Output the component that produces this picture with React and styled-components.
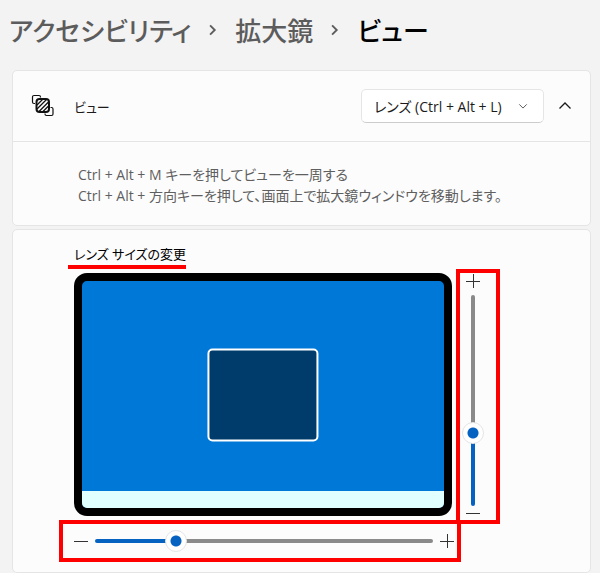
import { useState } from "react";
import styled, { createGlobalStyle } from "styled-components";

const GlobalStyle = createGlobalStyle`
  * {
    box-sizing: border-box;
  }

  body {
    margin: 0;
    background: #f3f3f3;
    color: #1b1b1b;
    font-family: "Open Sans", "Noto Sans CJK JP", sans-serif;
    font-size: 14px;
    font-feature-settings: "palt";
  }
`;

const ViewIcon = () => (
  <svg width="24" height="24" viewBox="0 0 24 24" fill="none" stroke="#111" aria-hidden="true">
    <path d="M4 9.500H3A1.500 1.500 0 0 1 1.500 8V3A1.500 1.500 0 0 1 3 1.500H8A1.500 1.500 0 0 1 9.500 3V3.500" strokeWidth="1.200" />
    <path d="M19.500 13.500H20.500A1.500 1.500 0 0 1 22 15V20A1.500 1.500 0 0 1 20.500 21.500H15.500A1.500 1.500 0 0 1 14 20V19.500" strokeWidth="1.200" />
    <rect x="5.500" y="5" width="12.500" height="13" rx="3" strokeWidth="2" />
    <path d="M6 11L11.500 5.500M6 15L15.500 5.500M8 17.500L17.500 8M12 17.500L17.500 12" strokeWidth="1.300" />
  </svg>
);

const Chevron = ({ d, size = 12, width = 1 }) => (
  <svg width={size} height={size} viewBox="0 0 12 12" fill="none" stroke="currentColor" strokeWidth={width} aria-hidden="true">
    <path d={d} />
  </svg>
);

const Minus = () => (
  <svg width="14" height="14" viewBox="0 0 14 14" stroke="#333" aria-hidden="true">
    <path d="M0 7.500H14" />
  </svg>
);

const Plus = () => (
  <svg width="14" height="14" viewBox="0 0 14 14" stroke="#333" aria-hidden="true">
    <path d="M0 7.500H14M7.500 0V14" />
  </svg>
);

export default function App() {
  const [view, setView] = useState("lens");
  const [open, setOpen] = useState(true);
  const [lensWidth, setLensWidth] = useState(22);
  const [lensHeight, setLensHeight] = useState(33);

  return (
    <Page>
      <GlobalStyle />
      <Breadcrumb aria-label="階層">
        <Crumb href="#accessibility">アクセシビリティ</Crumb>
        <Chevron d="M3.500 2L7.500 6L3.500 10" size={14} width={1.600} />
        <Crumb href="#magnifier">拡大鏡</Crumb>
        <Chevron d="M3.500 2L7.500 6L3.500 10" size={14} width={1.600} />
        <Current>ビュー</Current>
      </Breadcrumb>

      <Card>
        <CardHeader>
          <ViewIcon />
          <ViewLabel htmlFor="view">ビュー</ViewLabel>
          <SelectWrap>
            <Select id="view" value={view} onChange={(e) => setView(e.target.value)}>
              <option value="lens">レンズ (Ctrl + Alt + L)</option>
              <option value="full">全画面表示 (Ctrl + Alt + F)</option>
              <option value="docked">固定 (Ctrl + Alt + D)</option>
            </Select>
            <SelectArrow>
              <Chevron d="M1.500 4L6 8.500L10.500 4" size={10} width={1.200} />
            </SelectArrow>
          </SelectWrap>
          <Toggle aria-label="詳細" aria-expanded={open} onClick={() => setOpen(!open)}>
            <Chevron d={open ? "M.5 8.500L6 3L11.500 8.500" : "M.5 3.500L6 9L11.500 3.500"} width={1.300} />
          </Toggle>
        </CardHeader>
        {open && (
          <Hints>
            <Hint>Ctrl + Alt + M キーを押してビューを一周する</Hint>
            <Hint>Ctrl + Alt + 方向キーを押して、画面上で拡大鏡ウィンドウを移動します。</Hint>
          </Hints>
        )}
      </Card>

      <LensCard>
        <LensTitle>レンズ サイズの変更</LensTitle>
        <LensGrid>
          <Screen>
            <Lens style={{ width: `${12 + lensWidth * 0.85}%`, height: `${13 + lensHeight * 0.85}%` }} />
            <Taskbar />
          </Screen>
          <VerticalGroup>
            <Plus />
            <VerticalSlider
              type="range"
              aria-label="レンズの高さ"
              value={lensHeight}
              onChange={(e) => setLensHeight(Number(e.target.value))}
              style={{ "--value": lensHeight / 100 }}
            />
            <Minus />
          </VerticalGroup>
          <HorizontalGroup>
            <Minus />
            <HorizontalSlider
              type="range"
              aria-label="レンズの幅"
              value={lensWidth}
              onChange={(e) => setLensWidth(Number(e.target.value))}
              style={{ "--value": lensWidth / 100 }}
            />
            <Plus />
          </HorizontalGroup>
        </LensGrid>
      </LensCard>
    </Page>
  );
}

const Page = styled.main`
  padding: 10px 9px 0 12px;
`;

const Breadcrumb = styled.nav`
  display: flex;
  align-items: center;
  gap: 15px;
  height: 40px;
  margin-bottom: 20px;
  margin-left: -3px;
  color: #5c5c5c;
  font-size: 26px;
  font-weight: 500;
  font-family: "Noto Sans CJK JP", sans-serif;
  line-height: 40px;
  white-space: nowrap;
`;

const Crumb = styled.a`
  color: #5c5c5c;
  text-decoration: none;
`;

const Current = styled.span`
  color: #000;
`;

const Card = styled.section`
  margin-bottom: 3px;
  background: #fcfcfc;
  border: 1px solid #e5e5e5;
  border-radius: 5px;
`;

const CardHeader = styled.div`
  display: flex;
  align-items: center;
  height: 70px;
  padding: 0 12px 0 18px;
`;

const ViewLabel = styled.label`
  flex: 1;
  margin-left: 19px;
  font-size: 13px;
`;

const SelectWrap = styled.div`
  position: relative;
`;

const Select = styled.select`
  appearance: none;
  width: 183px;
  height: 34px;
  padding: 0 32px 0 12px;
  color: #1b1b1b;
  background: #fff;
  border: 1px solid #e5e5e5;
  border-bottom-color: #ccc;
  border-radius: 5px;
  font: inherit;
  font-feature-settings: "palt";
`;

const SelectArrow = styled.span`
  position: absolute;
  top: 50%;
  right: 16px;
  display: flex;
  color: #5c5c5c;
  transform: translateY(-50%);
  pointer-events: none;
`;

const Toggle = styled.button`
  display: flex;
  margin-left: 8px;
  padding: 7px;
  color: #1b1b1b;
  background: none;
  border: none;
  cursor: pointer;
`;

const Hints = styled.div`
  padding: 22px 20px 19px 65px;
  border-top: 1px solid #e5e5e5;
`;

const Hint = styled.p`
  margin: 0;
  color: #5f5f5f;
  font-size: 14px;
  line-height: 21px;
`;

const LensCard = styled(Card)`
  margin-bottom: 0;
  padding: 14px 20px 10px 46px;
`;

const LensTitle = styled.h2`
  width: fit-content;
  margin: 0 0 0 9px;
  padding-left: 6px;
  border-bottom: 4px solid #f00;
  color: #000;
  font-size: 13px;
  font-weight: 400;
  line-height: 21px;
`;

const LensGrid = styled.div`
  display: grid;
  grid-template-columns: minmax(0, 397px) 44px;
`;

const Screen = styled.div`
  position: relative;
  display: flex;
  align-items: flex-end;
  height: 243px;
  margin: 4px 4px 4px 15px;
  background: #0078d7;
  border: 8px solid #000;
  border-radius: 13px;
`;

const Lens = styled.div`
  position: absolute;
  top: 50%;
  left: 50%;
  background: #003c6b;
  border: 2px solid #fff;
  border-radius: 5px;
  transform: translate(-50%, -50%);
`;

const Taskbar = styled.div`
  flex: 1;
  height: 17px;
  background: #e0ffff;
  border-radius: 0 0 5px 5px;
`;

const SliderGroup = styled.div`
  display: flex;
  align-items: center;
  border: 4px solid #f00;
`;

const VerticalGroup = styled(SliderGroup)`
  flex-direction: column;
  margin-bottom: -4px;
  padding-top: 1px;
  padding-right: 10px;
`;

const HorizontalGroup = styled(SliderGroup)`
  height: 42px;
  gap: 7px;
  margin-right: -5px;
  padding: 0 3px 0 11px;
`;

const Slider = styled.input`
  --stop: calc(11px + (100% - 22px) * var(--value));
  appearance: none;
  flex: 1;
  margin: 0;
  background: none;
  cursor: pointer;

  &::-webkit-slider-thumb {
    appearance: none;
    width: 22px;
    height: 22px;
    background: radial-gradient(circle, #0562c1 5px, #fff 6px);
    border: 1px solid #e5e5e5;
    border-radius: 50%;
  }
`;

const HorizontalSlider = styled(Slider)`
  min-width: 0;
  height: 22px;

  &::-webkit-slider-runnable-track {
    height: 4px;
    background: linear-gradient(to right, #0562c1 var(--stop), #8a8a8a var(--stop));
    border-radius: 2px;
  }

  &::-webkit-slider-thumb {
    margin-top: -9px;
  }
`;

const VerticalSlider = styled(Slider)`
  writing-mode: vertical-lr;
  direction: rtl;
  width: 22px;
  min-height: 0;
  margin: 7px 0 0;

  &::-webkit-slider-runnable-track {
    width: 4px;
    background: linear-gradient(to top, #0562c1 var(--stop), #8a8a8a var(--stop));
    border-radius: 2px;
  }

  &::-webkit-slider-thumb {
    margin-left: -9px;
  }
`;
